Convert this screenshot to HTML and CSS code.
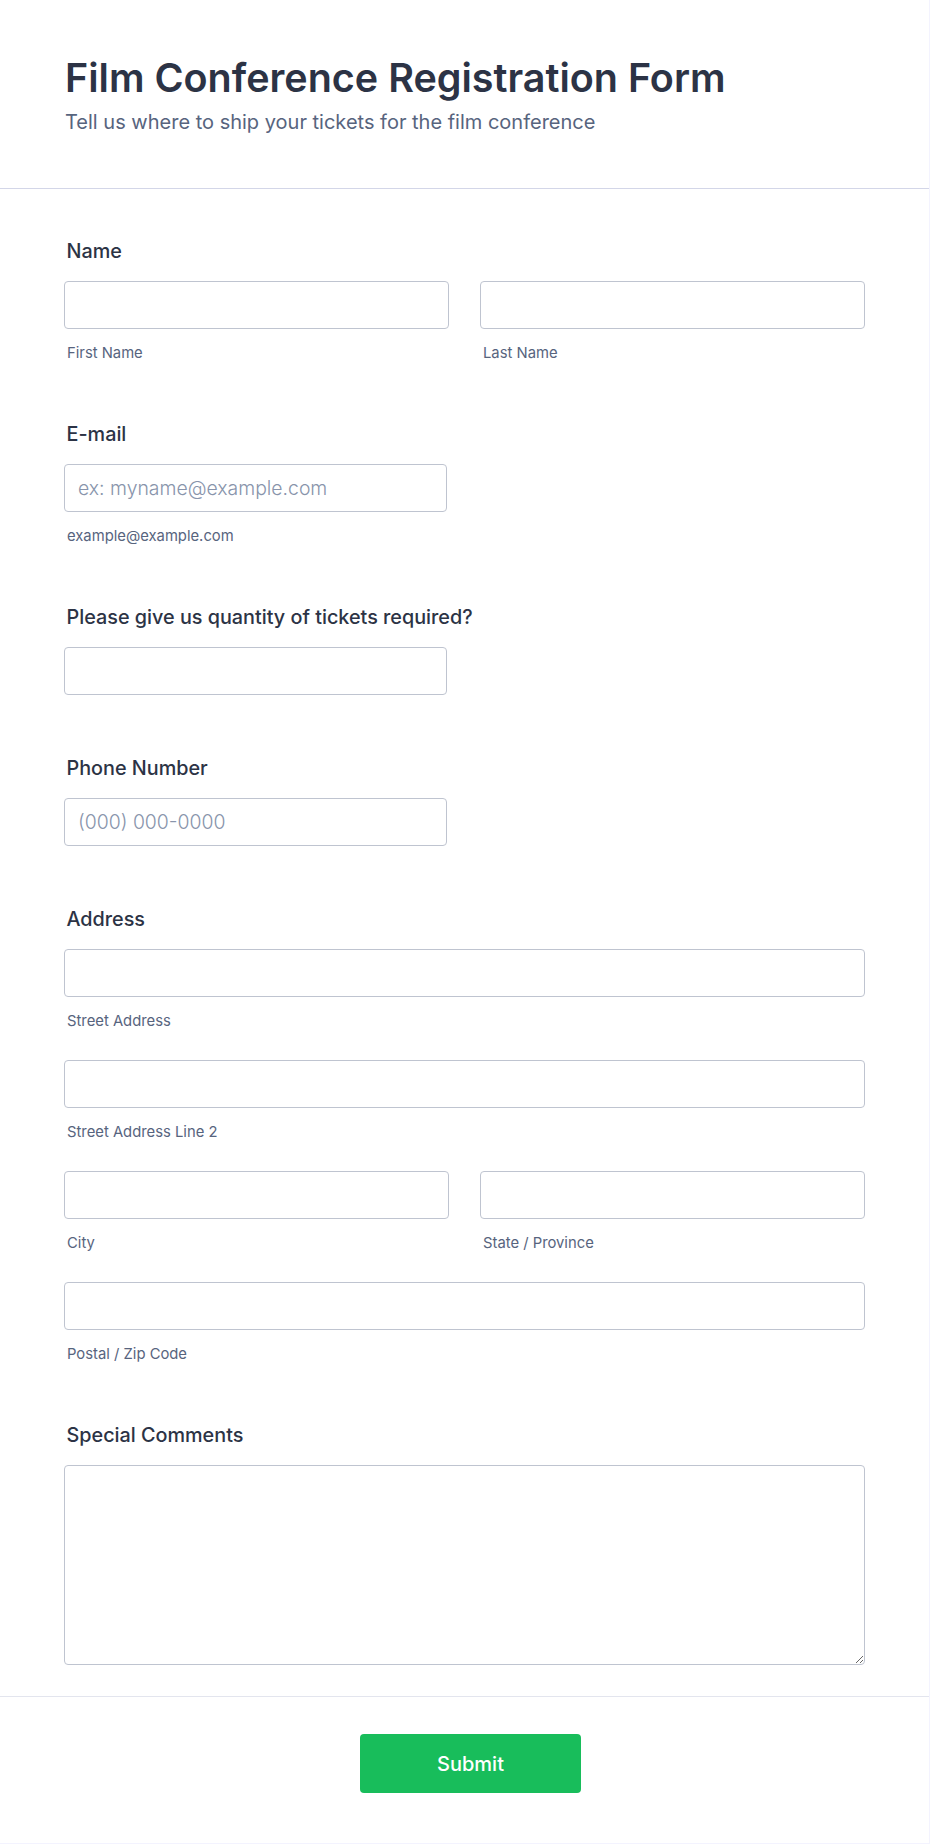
FILE: index.html
```html
<!DOCTYPE html>
<html lang="en">
<head>
<meta charset="utf-8">
<title>Film Conference Registration Form</title>
<link rel="stylesheet" href="styles.css">
</head>
<body>
<form class="card">
  <header class="header">
    <h1 class="title">Film Conference Registration Form</h1>
    <p class="subtitle">Tell us where to ship your tickets for the film conference</p>
  </header>

  <div class="body">
    <div class="field">
      <label class="label">Name</label>
      <div class="row2">
        <div class="part">
          <input class="input" type="text">
          <span class="sublabel">First Name</span>
        </div>
        <div class="part">
          <input class="input" type="text">
          <span class="sublabel">Last Name</span>
        </div>
      </div>
    </div>

    <div class="field">
      <label class="label">E-mail</label>
      <div class="part narrow">
        <input class="input" type="email" placeholder="ex: myname@example.com">
        <span class="sublabel">example@example.com</span>
      </div>
    </div>

    <div class="field plain">
      <label class="label">Please give us quantity of tickets required?</label>
      <div class="part narrow">
        <input class="input" type="text">
      </div>
    </div>

    <div class="field plain">
      <label class="label">Phone Number</label>
      <div class="part narrow">
        <input class="input" type="tel" placeholder="(000) 000-0000">
      </div>
    </div>

    <div class="field">
      <label class="label">Address</label>
      <div class="stack">
        <div class="part">
          <input class="input" type="text">
          <span class="sublabel">Street Address</span>
        </div>
        <div class="part">
          <input class="input" type="text">
          <span class="sublabel">Street Address Line 2</span>
        </div>
        <div class="row2">
          <div class="part">
            <input class="input" type="text">
            <span class="sublabel">City</span>
          </div>
          <div class="part">
            <input class="input" type="text">
            <span class="sublabel">State / Province</span>
          </div>
        </div>
        <div class="part">
          <input class="input" type="text">
          <span class="sublabel">Postal / Zip Code</span>
        </div>
      </div>
    </div>

    <div class="field">
      <label class="label">Special Comments</label>
      <textarea class="textarea"></textarea>
    </div>
  </div>

  <footer class="footer">
    <button class="submit" type="button">Submit</button>
  </footer>
</form>
</body>
</html>
```

FILE: styles.css
```css
html, body {
  margin: 0;
  padding: 0;
}

body {
  background: #f3f3fe;
  font-family: Inter, "Noto Sans", "Liberation Sans", sans-serif;
  color: #2c3345;
}

.card {
  width: 929px;
  height: 1843px;
  box-sizing: border-box;
  background: #ffffff;
  display: flex;
  flex-direction: column;
}

.header {
  padding: 55px 64px 53px 65px;
  border-bottom: 1px solid #d3d6e8;
}

.title {
  margin: 0;
  font-size: 39.5px;
  line-height: 46px;
  font-weight: 600;
  color: #2c3345;
  letter-spacing: 0;
}

.subtitle {
  margin: 9px 0 0;
  font-size: 20px;
  line-height: 25px;
  font-weight: 400;
  color: #57647e;
}

.body {
  padding: 50px 64px 31px;
  display: flex;
  flex-direction: column;
  gap: 58px;
}

.field.plain {
  padding-bottom: 3px;
}

.label {
  display: block;
  font-size: 19.8px;
  line-height: 24px;
  font-weight: 500;
  color: #2c3345;
  margin: 0 0 18px 2.5px;
}

.row2 {
  display: grid;
  grid-template-columns: 1fr 1fr;
  column-gap: 31px;
}

.stack {
  display: flex;
  flex-direction: column;
  gap: 28px;
}

.part {
  display: flex;
  flex-direction: column;
}

.part.narrow {
  width: 383px;
}

.input {
  display: block;
  box-sizing: border-box;
  width: 100%;
  height: 48px;
  margin: 0;
  padding: 0 13px;
  border: 1px solid #bfc4d0;
  border-radius: 4px;
  background: #ffffff;
  font-family: inherit;
  font-size: 19.4px;
  font-weight: 300;
  color: #2c3345;
  outline: none;
}

.input::placeholder {
  color: #8894ab;
}

.sublabel {
  display: block;
  margin: 14px 0 0 3px;
  font-size: 14.8px;
  line-height: 21px;
  color: #57647e;
}

.textarea {
  display: block;
  box-sizing: border-box;
  width: 100%;
  height: 200px;
  margin: 0;
  padding: 10px 13px;
  border: 1px solid #bfc4d0;
  border-radius: 4px;
  background: #ffffff;
  font-family: inherit;
  font-size: 19px;
  outline: none;
  resize: vertical;
}

.footer {
  border-top: 1px solid #e3e5ee;
  padding: 37px 64px 49px 76px;
  display: flex;
  justify-content: center;
}

.submit {
  width: 221px;
  height: 59px;
  border: none;
  border-radius: 4px;
  background: #18bd5b;
  color: #ffffff;
  font-family: inherit;
  font-size: 20px;
  font-weight: 500;
  cursor: pointer;
}
```
